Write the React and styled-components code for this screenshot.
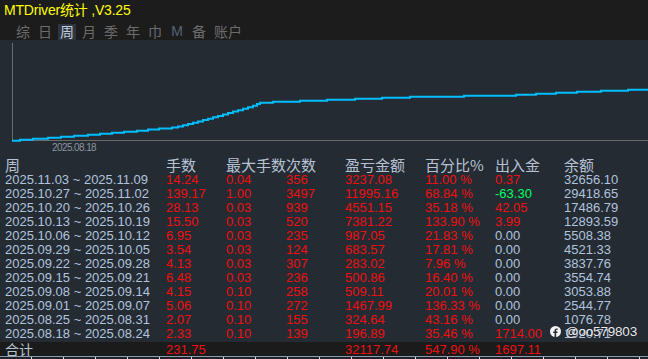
import styled, { createGlobalStyle } from 'styled-components';

const GlobalStyle = createGlobalStyle`
  html, body {
    margin: 0;
    padding: 0;
    background: #252b33;
  }
  body {
    font-family: "Liberation Sans", "Noto Sans CJK SC", sans-serif;
  }
`;

const Frame = styled.div`
  position: relative;
  width: 648px;
  height: 359px;
  overflow: hidden;
  background: #252b33;
  display: flex;
  flex-direction: column;
`;

const TopBar = styled.div`
  background: #1c1c1c;
  height: 40px;
  padding-left: 4px;
  display: flex;
  flex-direction: column;
`;

const Title = styled.div`
  color: #ffff00;
  font-size: 14px;
  line-height: 20px;
  height: 21px;
  letter-spacing: -0.2px;
`;

const Tabs = styled.div`
  display: flex;
  gap: 4px;
  padding-left: 10px;
  margin-top: 3px;
`;

const Tab = styled.div`
  min-width: 14px;
  padding: 0 2px;
  height: 16px;
  line-height: 15px;
  font-size: 14px;
  text-align: center;
  color: ${(p) => (p.$active ? '#c4ccd6' : p.$latin ? '#566474' : '#6c6c6c')};
  background: ${(p) => (p.$active ? '#2c3540' : 'transparent')};
  font-family: ${(p) => (p.$latin ? '"Liberation Sans", sans-serif' : '"Noto Sans CJK SC", sans-serif')};
`;

const ChartBox = styled.div`
  height: 115px;
  flex: none;
`;

const Table = styled.div`
  display: flex;
  flex-direction: column;
  padding-top: 2px;
`;

const cols = '161px 60px 60px 59px 80px 70px 69px 1fr';

const HeaderRow = styled.div`
  display: grid;
  grid-template-columns: ${cols};
  padding-left: 5px;
  height: 16px;
  line-height: 15px;
  font-family: "Noto Sans CJK SC", sans-serif;
  font-size: 15px;
  color: #b6c2d4;
  white-space: nowrap;
`;

const HeadCell = styled.div`
  grid-column: ${(p) => (p.$span ? `span ${p.$span}` : 'auto')};
  font-family: "Noto Sans CJK SC", sans-serif;
`;

const Row = styled.div`
  display: grid;
  grid-template-columns: ${cols};
  padding-left: 5px;
  height: 14px;
  line-height: 14px;
  font-size: 13px;
  white-space: nowrap;
`;

const Cell = styled.div`
  color: ${(p) => (p.$tone === 'red' ? '#ee1010' : p.$tone === 'green' ? '#00ff66' : '#b0c4de')};
`;

const TotalRow = styled(Row)`
  background: #1b1b1b;
  height: 14px;
  margin-top: 1px;
  line-height: 15px;
`;

const TotalLabel = styled.div`
  color: #b6c2d4;
  font-family: "Noto Sans CJK SC", sans-serif;
  font-size: 14px;
  line-height: 14px;
`;

const BottomStrip = styled.div`
  flex: 1;
  border-top: 1px solid #8c9cae;
  background:
    repeating-linear-gradient(90deg, transparent 0 31px, #d8dde4 31px 32px) top / 100% 2px no-repeat,
    #1e2228;
`;

const Watermark = styled.div`
  position: absolute;
  left: 550px;
  top: 324px;
  display: flex;
  align-items: center;
  gap: 4px;
  color: rgba(255, 255, 255, 0.92);
  font-size: 13.5px;
  letter-spacing: -0.2px;
  text-shadow: 0 0 1px rgba(0, 0, 0, 0.4);
`;

const tabs = ['综', '日', '周', '月', '季', '年', '巾', 'M', '备', '账户'];

const rows = [
  ['2025.11.03 ~ 2025.11.09', '14.24', '0.04', '356', '3237.08', '11.00 %', '0.37', '32656.10'],
  ['2025.10.27 ~ 2025.11.02', '139.17', '1.00', '3497', '11995.16', '68.84 %', '-63.30', '29418.65'],
  ['2025.10.20 ~ 2025.10.26', '28.13', '0.03', '939', '4551.15', '35.18 %', '42.05', '17486.79'],
  ['2025.10.13 ~ 2025.10.19', '15.50', '0.03', '520', '7381.22', '133.90 %', '3.99', '12893.59'],
  ['2025.10.06 ~ 2025.10.12', '6.95', '0.03', '235', '987.05', '21.83 %', '0.00', '5508.38'],
  ['2025.09.29 ~ 2025.10.05', '3.54', '0.03', '124', '683.57', '17.81 %', '0.00', '4521.33'],
  ['2025.09.22 ~ 2025.09.28', '4.13', '0.03', '307', '283.02', '7.96 %', '0.00', '3837.76'],
  ['2025.09.15 ~ 2025.09.21', '6.48', '0.03', '236', '500.86', '16.40 %', '0.00', '3554.74'],
  ['2025.09.08 ~ 2025.09.14', '4.15', '0.10', '258', '509.11', '20.01 %', '0.00', '3053.88'],
  ['2025.09.01 ~ 2025.09.07', '5.06', '0.10', '272', '1467.99', '136.33 %', '0.00', '2544.77'],
  ['2025.08.25 ~ 2025.08.31', '2.07', '0.10', '155', '324.64', '43.16 %', '0.00', '1076.78'],
  ['2025.08.18 ~ 2025.08.24', '2.33', '0.10', '139', '196.89', '35.46 %', '1714.00', '1920.71'],
];

const cashTone = (v) => {
  const n = parseFloat(v);
  if (n > 0) return 'red';
  if (n < 0) return 'green';
  return undefined;
};

// equity curve, page coordinates (chart starts at y=40)
const pts = [
  [12, 140.7], [20, 139.7], [33, 138.7], [48, 137.7], [61, 136.7], [74, 135.7],
  [88, 134.7], [100, 133.7], [112, 132.7], [124, 131.7], [137, 130.7], [148, 129.5],
  [159, 128.5], [172, 127.5], [178, 126.5], [183, 125.3], [188, 124], [193, 122.7],
  [198, 121.4], [203, 120.1], [208, 118.8], [213, 117.3], [218, 115.9], [223, 114.5],
  [228, 113], [233, 111.6], [238, 110.2], [243, 108.8], [248, 107.3], [253, 105.7],
  [257, 104], [260, 102.7], [273, 101.7], [300, 100.7], [327, 99.7], [355, 98.7],
  [382, 97.7], [410, 96.7], [464, 95.7], [516, 94.7], [536, 93.7], [556, 92.7],
  [577, 91.7], [601, 90.7], [628, 89.7], [648, 89.7],
];

function stepPath(list) {
  let d = `M${list[0][0]} ${list[0][1] - 40}`;
  for (let i = 1; i < list.length; i += 1) {
    d += ` H${list[i][0]} V${list[i][1] - 40}`;
  }
  return d;
}

function Chart() {
  return (
    <ChartBox>
      <svg width="648" height="115" viewBox="0 0 648 115">
        <line x1="12.5" y1="3" x2="12.5" y2="100.5" stroke="#6c6c6c" strokeWidth="1" />
        <line x1="12" y1="100.5" x2="648" y2="100.5" stroke="#6c6c6c" strokeWidth="1" />
        <path d={stepPath(pts)} fill="none" stroke="#00bfff" strokeWidth="2" />
        <text
          x="52"
          y="111"
          fill="#8a949f"
          fontSize="10"
          letterSpacing="-0.6"
          fontFamily="Liberation Sans, sans-serif"
        >
          2025.08.18
        </text>
      </svg>
    </ChartBox>
  );
}

function FbIcon() {
  return (
    <svg width="11" height="11" viewBox="0 0 24 24">
      <circle cx="12" cy="12" r="12" fill="rgba(255,255,255,0.95)" />
      <path
        d="M13.4 24v-8.6h2.9l.4-3.4h-3.3V9.9c0-1 .3-1.6 1.7-1.6h1.8v-3c-.3 0-1.4-.1-2.6-.1-2.6 0-4.3 1.6-4.3 4.4V12H7v3.4h3v8.6z"
        fill="#252b33"
      />
    </svg>
  );
}

export default function App() {
  return (
    <>
      <GlobalStyle />
      <Frame>
        <TopBar>
          <Title>MTDriver统计 ,V3.25</Title>
          <Tabs>
            {tabs.map((t) => (
              <Tab key={t} $active={t === '周'} $latin={t === 'M'}>{t}</Tab>
            ))}
          </Tabs>
        </TopBar>
        <Chart />
        <Table>
          <HeaderRow>
            <HeadCell>周</HeadCell>
            <HeadCell>手数</HeadCell>
            <HeadCell $span={2}>最大手数次数</HeadCell>
            <HeadCell>盈亏金额</HeadCell>
            <HeadCell>百分比%</HeadCell>
            <HeadCell>出入金</HeadCell>
            <HeadCell>余额</HeadCell>
          </HeaderRow>
          {rows.map((r) => (
            <Row key={r[0]}>
              <Cell>{r[0]}</Cell>
              <Cell $tone="red">{r[1]}</Cell>
              <Cell $tone="red">{r[2]}</Cell>
              <Cell $tone="red">{r[3]}</Cell>
              <Cell $tone="red">{r[4]}</Cell>
              <Cell $tone="red">{r[5]}</Cell>
              <Cell $tone={cashTone(r[6])}>{r[6]}</Cell>
              <Cell>{r[7]}</Cell>
            </Row>
          ))}
          <TotalRow>
            <TotalLabel>合计</TotalLabel>
            <Cell $tone="red">231.75</Cell>
            <Cell />
            <Cell />
            <Cell $tone="red">32117.74</Cell>
            <Cell $tone="red">547.90 %</Cell>
            <Cell $tone="red">1697.11</Cell>
            <Cell />
          </TotalRow>
        </Table>
        <BottomStrip />
        <Watermark>
          <FbIcon />
          <span>@oo579803</span>
        </Watermark>
      </Frame>
    </>
  );
}
